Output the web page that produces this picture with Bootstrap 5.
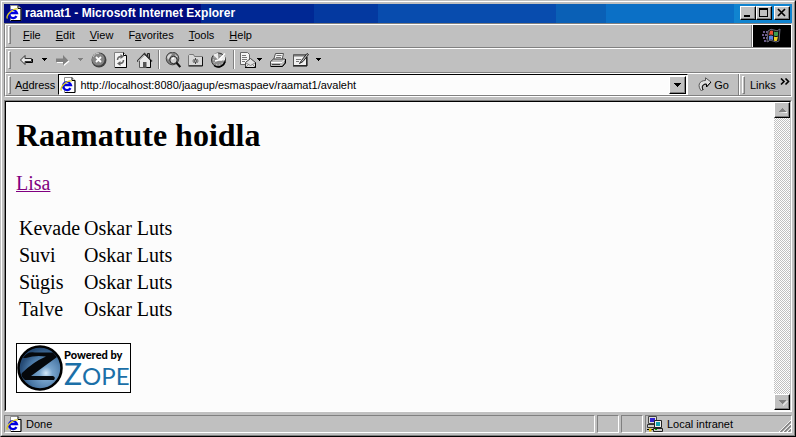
<!DOCTYPE html>
<html lang="et">
<head>
<meta charset="utf-8">
<meta name="viewport" content="width=device-width, initial-scale=1">
<title>raamat1 - Microsoft Internet Explorer</title>
<link href="https://cdn.jsdelivr.net/npm/bootstrap@5.3.0/dist/css/bootstrap.min.css" rel="stylesheet">
<style>
:root { --face: #c0c0c0; --shade: #808080; }
body { background: var(--face); font-family: "Liberation Sans", Arial, sans-serif; font-size: 11px; line-height: 14px; color: #000; overflow: hidden; }
svg { display: block; flex: none; }
.win { border: 1px solid; border-color: #c0c0c0 #000 #000 #c0c0c0; }
.win-in { border: 1px solid; border-color: #fff var(--shade) var(--shade) #fff; padding: 2px; }
.titlebar { height: 19px; padding: 0 2px 1px; color: #fff;
  background: linear-gradient(90deg, #000a7e 0 25%, #002894 25% 39.4%, #0439a0 39.4% 47.4%, #084cae 47.4% 70%, #0a60b6 70% 76.4%, #0b70c6 76.4% 92.6%, #1084d0 92.6%); }
.titlebar h1 { font-size: 12px; line-height: 14px; font-weight: 700; margin: 0 0 0 3px; }
.rb { background: var(--face); border: 1px solid; border-color: #fff #000 #000 #fff; box-shadow: inset -1px -1px 0 var(--shade); padding: 0; color: #000; border-radius: 0; flex: none; }
.cap { width: 16px; height: 14px; }
.cap-close { margin-left: 2px; }
.bars { border: 1px solid; border-color: var(--shade) #fff #fff var(--shade); }
.bar { border-top: 1px solid #fff; border-left: 1px solid #fff; border-bottom: 1px solid var(--shade); }
.bar-menu { height: 24px; }
.bar-menu > .flex-grow-1 { padding-bottom: 2px; }
.bar-tools { height: 25px; padding-bottom: 2px; }
.bar-addr { height: 23px; }
.grip { width: 3px; height: 18px; border: 1px solid; border-color: #fff var(--shade) var(--shade) #fff; margin: 0 4px 0 2px; flex: none; }
.plain { border: 0; background: none; padding: 0; color: #000; flex: none; }
.menus { gap: 15px; padding-left: 8px; }
.brand { width: 39px; background: #000; border-left: 1px solid #fff; }
.brandwrap { border-left: 1px solid var(--shade); }
.tools { gap: 7px; }
.tools-nav { padding: 0 5px 0 4px; }
.tools-find { padding: 0 6px 0 5px; }
.tools-doc { padding-left: 5px; }
.pair { gap: 1px; }
.vsep { width: 2px; border-left: 1px solid var(--shade); border-right: 1px solid #fff; flex: none; }
.vsep-short { height: 19px; }
.field { background: #fcfcfc; border: 1px solid; border-color: #000 #fff #fff #000; height: 21px; margin-left: 3px; padding: 0 1px 0 1px; }
.field input { border: 0; outline: 0; background: none; padding: 0 0 0 4px; font-size: 11px; color: #000; min-width: 0; }
.drop { width: 17px; height: 18px; }
.go { gap: 2px; margin: 0 9px 0 10px; }
.links { width: 42px; padding-left: 1px; }
.view { border: 1px solid; border-color: var(--shade) #fff #fff var(--shade); margin-top: 3px; height: calc(100vh - 125px); }
.view-in { border: 1px solid; border-color: #000 var(--face) #fcfcfc #000; background: #fcfcfc; }
.doc { font-family: "Liberation Serif", "Times New Roman", serif; font-size: 20px; line-height: 24px; padding: 15px 10px 0; }
.doc h2 { font-size: 32px; line-height: 37px; font-weight: 700; margin: 0 0 17px; }
.doc p { margin: 0 0 19px; }
.doc a { color: #800080; text-decoration-thickness: 1px; }
.books { border-collapse: separate; border-spacing: 2px; line-height: 23px; margin: 0 0 19px; }
.books td { padding: 1px; }
.doc a.zope { display: inline-block; border: 1px solid #000; background: #fff; }
.scroll { width: 16px; background: repeating-conic-gradient(#fff 0 25%, #c0c0c0 0 50%) 0 0 / 2px 2px; }
.scroll .rb { width: 16px; height: 16px; }
.status { height: 18px; margin-top: 3px; gap: 2px; }
.sunk { border: 1px solid; border-color: var(--shade) #fff #fff var(--shade); padding-left: 1px; }
.tiny { width: 22px; }
.zone { width: 147px; }
.note { padding-left: 4px; }
</style>
</head>
<body>
<svg width="0" height="0" class="position-absolute" aria-hidden="true">
  <symbol id="page" viewBox="0 0 16 16">
    <path d="M4.500 .5h7.500l3 3v12H4.500z" fill="#fff" stroke="#909090"/><path d="M12 .5v3h3v12H5" fill="none" stroke="#000"/>
    <path d="M10.500 11.200A4 4 0 1 1 11 8.200H4" fill="none" stroke="#0000e0" stroke-width="2.300"/>
    <path d="M1.500 13.500C-1 11 7 2.500 12 4" fill="none" stroke="#d8c820" stroke-width="1.300"/>
  </symbol>
  <symbol id="caret" viewBox="0 0 6 16"><path d="M0 6h5v1H0zM1 7h3v1H1zM2 8h1v1H2z" shape-rendering="crispEdges"/></symbol>
</svg>
<div class="win min-vh-100 d-flex flex-column"><div class="win-in flex-grow-1 d-flex flex-column">
  <header class="titlebar d-flex align-items-center">
    <svg width="16" height="16"><use href="#page"/></svg>
    <h1 class="flex-grow-1">raamat1 - Microsoft Internet Explorer</h1>
    <button class="rb cap" aria-label="Minimize"><svg width="14" height="12"><path d="M3 8h6v2H3z"/></svg></button>
    <button class="rb cap" aria-label="Maximize"><svg width="14" height="12"><path d="M2 1h9v9H2zM3 3v6h7V3z" fill-rule="evenodd"/></svg></button>
    <button class="rb cap cap-close" aria-label="Close"><svg width="14" height="12"><path d="M3 2l7 7M10 2L3 9" stroke="#000" stroke-width="1.700"/></svg></button>
  </header>
  <div class="bars">
    <div class="bar bar-menu d-flex">
      <div class="d-flex align-items-center flex-grow-1">
        <span class="grip"></span>
        <nav class="menus d-flex" aria-label="Menu">
          <button class="plain"><u>F</u>ile</button><button class="plain"><u>E</u>dit</button><button class="plain"><u>V</u>iew</button><button class="plain">F<u>a</u>vorites</button><button class="plain"><u>T</u>ools</button><button class="plain"><u>H</u>elp</button>
        </nav>
      </div>
      <div class="brandwrap d-flex"><div class="brand d-flex align-items-center justify-content-center">
        <svg width="20" height="18" viewBox="0 0 20 18"><path d="M1 5h6M0 8h6M1 11h6M2 14h5" stroke="#6a5a8a" stroke-width="2" stroke-dasharray="2 1"/><path d="M6 4q3-3 6-1t6-1l-1 12q-3 2-6 0t-6 1z" fill="#111" stroke="#667" stroke-width="1"/><path d="M8 4q2-1 3 0v4q-2-1-4 0z" fill="#e85030"/><path d="M12 4.500q2 1 4 0v4q-2 1-4 0z" fill="#3c9a50"/><path d="M7 9q2-1 4 0v4q-2-1-4 0z" fill="#5a80e0"/><path d="M12 9.500q2 1 4 0l-1 4q-1 1-3 0z" fill="#f0d020"/></svg>
      </div></div>
    </div>
    <div class="bar bar-tools d-flex align-items-center">
      <span class="grip"></span>
      <div class="tools tools-nav d-flex">
        <button class="plain" aria-label="Back"><svg width="16" height="16" viewBox="0 0 16 16"><path d="M1.500 8L6 3.500V6.500h6.500v3H6v3z" fill="#e8e8e8" stroke="#333"/><path d="M6.500 10.500h7V7" fill="none" stroke="#000"/></svg></button>
        <button class="plain" aria-label="Back list"><svg width="6" height="16"><use href="#caret"/></svg></button>
        <button class="plain" aria-label="Forward"><svg width="16" height="16" viewBox="0 0 16 16"><path d="M2 7.500h7v-3l5.500 5-5.500 4.500v-3H2z" fill="#fff"/><path d="M1 6.500h7V3l5.500 5.500L8 13v-3H1z" fill="#808080"/></svg></button>
        <button class="plain" aria-label="Forward list"><svg width="6" height="16" fill="#808080"><use href="#caret"/></svg></button>
        <button class="plain" aria-label="Stop"><svg width="16" height="16" viewBox="0 0 16 16"><circle cx="8" cy="8" r="7.500" fill="#404040"/><circle cx="7.300" cy="7.300" r="6.300" fill="#858585"/><path d="M2 5a6 6 0 0 1 6-3.700" stroke="#ccc" fill="none"/><path d="M5 5l5 5M10 5l-5 5" stroke="#fff" stroke-width="1.800"/></svg></button>
        <button class="plain" aria-label="Refresh"><svg width="16" height="16" viewBox="0 0 16 16"><path d="M.5 .5h9l3 3v12H.5z" fill="#f4f4f4" stroke="#808080"/><path d="M9.500 .5v3h3v12H1" fill="none" stroke="#000"/><path d="M3.500 8q0-3.500 4-3.500M9.500 8q0 3.500-4 3.500" fill="none" stroke="#666" stroke-width="1.500"/><path d="M6.500 2l3.500 2.500L6.500 7zM6.500 9L3 11.500 6.500 14z" fill="#666"/></svg></button>
        <button class="plain" aria-label="Home"><svg width="16" height="16" viewBox="0 0 16 16"><path d="M10.500 1.500h2V6h-2z" fill="#888" stroke="#222"/><path d="M2.500 8v7.500h11V8L8 3z" fill="#e8e8e8" stroke="#555"/><path d="M0 9.500L7.500 1.500 15 9.500" fill="none" stroke="#333" stroke-width="1.500"/><path d="M1.500 9l6-6" stroke="#fff"/><path d="M6 10h3.500v5.500H6z" fill="#555"/><path d="M13.500 8v7.500h-4" fill="none" stroke="#000"/></svg></button>
      </div>
      <span class="vsep vsep-short"></span>
      <div class="tools tools-find d-flex">
        <button class="plain" aria-label="Search"><svg width="16" height="16" viewBox="0 0 16 16"><circle cx="7.500" cy="6.500" r="6.300" fill="#808080" stroke="#444"/><path d="M2 5q2-4 5-3L5 5l-2 3zM10 2l3 3-2 1z" fill="#d8d8d8"/><circle cx="8.500" cy="8" r="3.700" fill="#d0d0d0" stroke="#222"/><path d="M7 7l2-1" stroke="#fff" stroke-width="1.500"/><path d="M11.300 10.500l4 4.500" stroke="#111" stroke-width="2.200"/></svg></button>
        <button class="plain" aria-label="Favorites"><svg width="16" height="16" viewBox="0 0 16 16"><path d="M.5 13.500v-10l1-1h4l1 2h8v9z" fill="#d8d8d8" stroke="#777"/><path d="M.5 14h14V5" fill="none" stroke="#111"/><path d="M7.500 6v6M4.500 9h6M5.500 7l4 4M9.500 7l-4 4" stroke="#444"/><path d="M7 8.500h1v1H7z" fill="#fff"/></svg></button>
        <button class="plain" aria-label="History"><svg width="16" height="16" viewBox="0 0 16 16"><circle cx="7.500" cy="8" r="7" fill="#8c8c8c" stroke="#333"/><path d="M7.500 8L13 2.500A7 7 0 0 1 14 8zM7.500 8L2 3a7 7 0 0 1 5-2z" fill="#eee"/><circle cx="7.500" cy="8" r="5" fill="none" stroke="#ddd" stroke-dasharray="1 2"/><path d="M4 9l3.500-1L14 1.500M7.500 8h4" stroke="#fff" stroke-width="1.500" fill="none"/><path d="M3 13.500a7 7 0 0 0 11-4" fill="none" stroke="#000" stroke-width="1.500"/></svg></button>
      </div>
      <span class="vsep vsep-short"></span>
      <div class="tools tools-doc d-flex">
        <div class="pair d-flex">
          <button class="plain" aria-label="Mail"><svg width="16" height="16" viewBox="0 0 16 16"><path d="M.5 .5h7l2 2v10h-9z" fill="#f4f4f4" stroke="#666"/><path d="M2 3.500h4M2 5.500h5M2 7.500h5M2 9.500h3" stroke="#777"/><path d="M5.500 10.500l5-4 5 4v5h-10z" fill="#e0e0e0" stroke="#444"/><path d="M6 11l4.500 2.500L15 11M6 15l3-3M15 15l-3-3" fill="none" stroke="#888"/><path d="M5 15.500h10.500v-5" fill="none" stroke="#000"/></svg></button>
          <button class="plain" aria-label="Mail list"><svg width="6" height="16"><use href="#caret"/></svg></button>
        </div>
        <button class="plain" aria-label="Print"><svg width="16" height="16" viewBox="0 0 16 16"><path d="M3.500 8l2-6.500h8L12 8z" fill="#f4f4f4" stroke="#555"/><path d="M6.500 3.500h5M6 5.500h5" stroke="#777"/><path d="M.5 9.500l3-2.500h11.500v4l-3 3.500H.5z" fill="#b8b8b8" stroke="#444"/><path d="M1 10.500h11l3-3" fill="none" stroke="#fff"/><path d="M2 12.500h8" stroke="#444"/><path d="M1 14.500h11.500l3-3.500V7" fill="none" stroke="#000"/></svg></button>
        <button class="plain" aria-label="Edit"><svg width="16" height="16" viewBox="0 0 16 16"><path d="M.5 2.500h13v11H.5z" fill="#f0f0f0" stroke="#555"/><path d="M1 3.500h12" stroke="#777" stroke-width="2"/><path d="M3 7.500h5M3 9.500h3" stroke="#777"/><path d="M6.500 11.500l2-3 5.500-7 1.500 1-5.500 7z" fill="#bbb" stroke="#222"/><path d="M0 14h14V5" fill="none" stroke="#000"/></svg></button>
        <button class="plain" aria-label="Edit list"><svg width="6" height="16"><use href="#caret"/></svg></button>
      </div>
    </div>
    <div class="bar bar-addr d-flex align-items-center">
      <span class="grip"></span>
      <label for="addr">A<u>d</u>dress</label>
      <div class="field d-flex align-items-center flex-grow-1">
        <svg width="16" height="16"><use href="#page"/></svg>
        <input id="addr" class="flex-grow-1" value="http://localhost:8080/jaagup/esmaspaev/raamat1/avaleht">
        <button class="rb drop" aria-label="Show addresses"><svg width="15" height="16"><path d="M4 6h7v1H4zM5 7h5v1H5zM6 8h3v1H6zM7 9h1v1H7z"/></svg></button>
      </div>
      <button class="plain go d-flex align-items-center"><svg width="14" height="15" viewBox="0 0 14 15"><path d="M3.500 14C-1 9 1 3.500 7.500 3.500V.8L13 5 8.500 10V7C5 6.500 3 9 5 12.500z" fill="#e0e0e0" stroke="#555"/><path d="M13 5L8.500 10V7.300C5 7 3.500 9.500 5 13" fill="none" stroke="#000"/></svg>Go</button>
      <span class="vsep align-self-stretch"></span>
      <span class="grip"></span>
      <div class="links d-flex"><button class="plain me-1">Links</button><button class="plain align-self-start" aria-label="More links"><svg width="10" height="8" viewBox="0 0 10 8"><path d="M1 .5l3 3-3 3M5.500 .5l3 3-3 3" fill="none" stroke="#000" stroke-width="1.600"/></svg></button></div>
    </div>
  </div>
  <main class="view d-flex"><div class="view-in d-flex flex-grow-1">
    <div class="doc flex-grow-1">
      <h2>Raamatute hoidla</h2>
      <p><a href="#">Lisa</a></p>
      <table class="books"><tbody><tr><td>Kevade</td><td>Oskar Luts</td></tr><tr><td>Suvi</td><td>Oskar Luts</td></tr><tr><td>Sügis</td><td>Oskar Luts</td></tr><tr><td>Talve</td><td>Oskar Luts</td></tr></tbody></table>
      <a href="#" class="zope"><svg width="113" height="48" viewBox="0 0 113 48">
        <defs><radialGradient id="orb" cx=".64" cy=".62" r=".6"><stop offset="0" stop-color="#d4e8f8"/><stop offset=".25" stop-color="#78a4cc"/><stop offset=".7" stop-color="#4876a4"/><stop offset="1" stop-color="#254a75"/></radialGradient></defs>
        <circle cx="23" cy="24" r="21.500" fill="url(#orb)" stroke="#000" stroke-width="2.500"/>
        <path d="M6 14Q10 7 18 8.500H36L40 13L14 32H36Q39 33 37 36H8Q3 32 5 29Q16 18 29 12.500Q18 11 9 14Z" fill="#05080c"/>
        <text x="47" y="15" font-family="Lato, sans-serif" font-weight="900" font-size="11" fill="#000">Powered by</text>
        <text x="47" y="41" font-family="Lato, sans-serif" font-size="30" fill="#1c70a8">Z<tspan font-size="24">OPE</tspan></text>
      </svg></a>
    </div>
    <div class="scroll d-flex flex-column justify-content-between">
      <button class="rb" aria-label="Scroll up"><svg width="14" height="14"><path d="M4 10h8V9z" fill="#fff"/><path d="M7 5h1v1h1v1h1v1h1v1H4V8h1V7h1V6h1z" fill="#808080"/></svg></button>
      <button class="rb" aria-label="Scroll down"><svg width="14" height="14"><path d="M12 6l-4 4v1l5-5z" fill="#fff"/><path d="M4 5h7v1h-1v1H9v1H8v1H7V8H6V7H5V6H4z" fill="#808080"/></svg></button>
    </div>
  </div></main>
  <footer class="status d-flex">
    <div class="sunk flex-grow-1 d-flex align-items-center"><svg width="16" height="16"><use href="#page"/></svg><span class="note">Done</span></div>
    <div class="sunk tiny"></div>
    <div class="sunk tiny"></div>
    <div class="sunk zone d-flex align-items-center">
      <svg width="16" height="16" viewBox="0 0 16 16"><path d="M1.500 .5h8v7h-8z" fill="#ddd" stroke="#444"/><path d="M3 2h5v4H3z" fill="#3020d0"/><path d="M.5 8.500h9v3h-9z" fill="#ccc" stroke="#333"/><path d="M7.500 4.500h7v7h-7z" fill="#eee" stroke="#222"/><path d="M9 6h4v4H9z" fill="#10a0b0"/><path d="M6.500 12.500h9v3h-9z" fill="#ccc" stroke="#222"/><path d="M8 13h2v1H8z" fill="#0a0"/><path d="M0 13.500h6" stroke="#000"/><path d="M2 12.500h2.500v3H2z" fill="#e8c000"/></svg>
      <span class="note">Local intranet</span>
      <svg class="ms-auto align-self-end" width="12" height="12" viewBox="0 0 12 12"><path d="M0 12L12 0M4 12l8-8M8 12l4-4" stroke="#fff"/><path d="M1.500 12L12 1.500M5.500 12L12 5.500M9.500 12L12 9.500" stroke="#808080" stroke-width="1.500"/></svg>
    </div>
  </footer>
</div></div>
<script src="https://cdn.jsdelivr.net/npm/bootstrap@5.3.0/dist/js/bootstrap.bundle.min.js"></script>
</body>
</html>
